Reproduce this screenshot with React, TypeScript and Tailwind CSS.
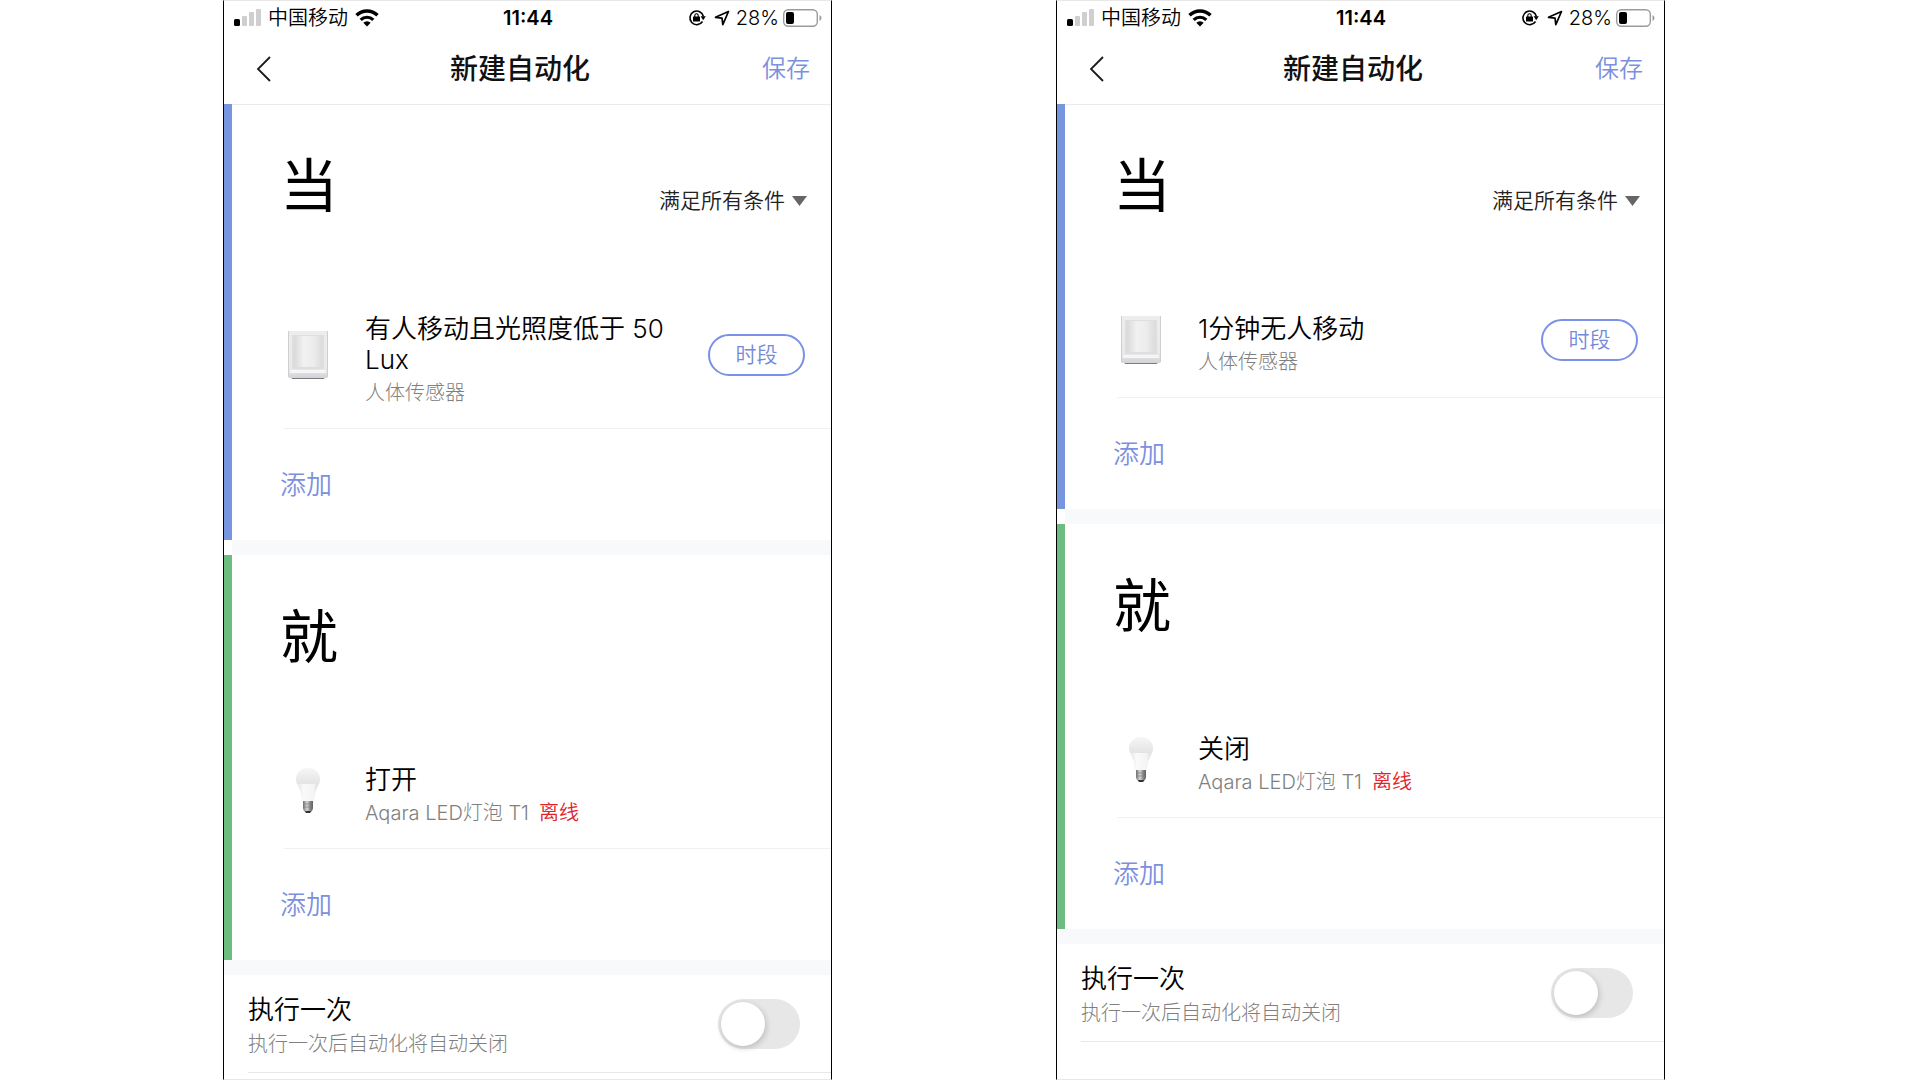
import React, { useId } from "react";

type Device = {
  kind: "sensor" | "bulb";
  title: string;
  name: string;
  offline?: boolean;
  period?: boolean;
};

type Automation = {
  when: Device;
  then: Device;
};

const automations: Automation[] = [
  {
    when: { kind: "sensor", title: "有人移动且光照度低于 50 Lux", name: "人体传感器", period: true },
    then: { kind: "bulb", title: "打开", name: "Aqara LED灯泡 T1", offline: true },
  },
  {
    when: { kind: "sensor", title: "1分钟无人移动", name: "人体传感器", period: true },
    then: { kind: "bulb", title: "关闭", name: "Aqara LED灯泡 T1", offline: true },
  },
];

function SensorIcon() {
  const id = useId();
  return (
    <svg viewBox="0 0 48 56" className="h-14 w-12 shrink-0" aria-hidden="true">
      <defs>
        <linearGradient id={`${id}f`} x1="0" x2="0" y1="0" y2="1">
          <stop offset="0" stopColor="#ededed" />
          <stop offset="0.8" stopColor="#e9e9eb" />
          <stop offset="1" stopColor="#d2d3d6" />
        </linearGradient>
        <linearGradient id={`${id}l`} x1="0" x2="1" y1="0" y2="0">
          <stop offset="0" stopColor="#d9d9d9" />
          <stop offset="0.35" stopColor="#f1f1f1" />
          <stop offset="0.7" stopColor="#ececec" />
          <stop offset="1" stopColor="#dcdcdc" />
        </linearGradient>
      </defs>
      <path d="M7 50h34l-1 2H8z" fill="#7c7c7e" />
      <path d="M4 4h40v45q0 2-2 2H6q-2 0-2-2z" fill={`url(#${id}f)`} />
      <path d="M4.5 4v46M43.5 4v46" stroke="#cfcfcf" fill="none" />
      <rect x="8" y="8" width="32" height="34" fill="#dedede" />
      <rect x="10" y="9" width="28" height="31" fill={`url(#${id}l)`} />
      <path d="M6 43h36v3H6z" fill="#f5f5f6" />
    </svg>
  );
}

function BulbIcon() {
  const id = useId();
  return (
    <svg viewBox="0 0 48 56" className="h-14 w-12 shrink-0" aria-hidden="true">
      <defs>
        <linearGradient id={`${id}g`} x1="0" x2="0" y1="0" y2="1">
          <stop offset="0" stopColor="#f6f6f6" />
          <stop offset="1" stopColor="#e3e3e3" />
        </linearGradient>
        <linearGradient id={`${id}b`} x1="0" x2="1" y1="0" y2="0">
          <stop offset="0" stopColor="#e4e4e4" />
          <stop offset="0.3" stopColor="#fafafa" />
          <stop offset="0.75" stopColor="#f4f4f4" />
          <stop offset="1" stopColor="#d8d8d8" />
        </linearGradient>
        <linearGradient id={`${id}s`} x1="0" x2="1" y1="0" y2="0">
          <stop offset="0" stopColor="#6f6f6f" />
          <stop offset="0.4" stopColor="#d8d8d8" />
          <stop offset="0.7" stopColor="#8a8a8a" />
          <stop offset="1" stopColor="#5c5c5c" />
        </linearGradient>
      </defs>
      <path d="M13 20q2 5 4 10l1 8h12l1-8q2-5 4-10z" fill={`url(#${id}b)`} />
      <path d="M12 16a12 11 0 0 1 24 0q0 3-1 5H13q-1-2-1-5z" fill={`url(#${id}g)`} />
      <path d="M19 38h10v7q0 2-2 4l-1 1h-4l-1-1q-2-2-2-4z" fill={`url(#${id}s)`} />
      <path d="M19 41h10M19 44h10" stroke="#777" strokeWidth="0.6" />
      <path d="M21 48h6l-1 2h-4z" fill="#333" />
    </svg>
  );
}

function StatusBar() {
  return (
    <div className="flex h-[33px] items-center pl-[10px] pr-[9px] text-[20px] leading-6 text-black">
      <div className="flex flex-1 items-center">
        <svg viewBox="0 0 28 17" className="h-[17px] w-7" aria-label="信号">
          <rect x="0" y="10" width="6" height="7" rx="1.5" fill="#000" />
          <rect x="8" y="7" width="5" height="10" rx="1" fill="#cfcfcf" />
          <rect x="15" y="3" width="5" height="14" rx="1" fill="#cfcfcf" />
          <rect x="22" y="0" width="5" height="17" rx="1" fill="#cfcfcf" />
        </svg>
        <span className="ml-[6px] font-[350]">中国移动</span>
        <svg viewBox="0 0 24 18" className="ml-[7px] h-[18px] w-6" aria-label="Wi-Fi">
          <path d="M1.5 6.3a15 15 0 0 1 21 0" fill="none" stroke="#000" strokeWidth="3.4" />
          <path d="M5.7 10.8a9 9 0 0 1 12.600 0" fill="none" stroke="#000" strokeWidth="3.2" />
          <path d="M12 17.5 8.3 13.8a5.300 5.300 0 0 1 7.400 0z" fill="#000" />
        </svg>
      </div>
      <span className="font-semibold">11:44</span>
      <div className="flex flex-1 items-center justify-end">
        <svg viewBox="0 0 18 18" className="h-[18px] w-[18px]" aria-hidden="true">
          <path d="M14.500 12.500a6.800 6.800 0 1 1 .9-5" fill="none" stroke="#000" strokeWidth="1.6" />
          <path d="M12.600 7.300h5.200l-2.600 4z" fill="#000" />
          <rect x="5" y="7.5" width="7" height="5" rx="0.6" fill="#000" />
          <path d="M6.800 8V6.500a1.700 1.700 0 0 1 3.400 0V8" fill="none" stroke="#000" strokeWidth="1.1" />
        </svg>
        <svg viewBox="0 0 16 16" className="ml-2 h-4 w-4" aria-hidden="true">
          <path
            d="M14.500 1.500 1.500 7.300l6.500.8.800 6.500z"
            fill="none"
            stroke="#000"
            strokeWidth="1.7"
            strokeLinejoin="round"
          />
        </svg>
        <span className="ml-[6px] font-light">28%</span>
        <svg viewBox="0 0 39 18" className="ml-1 h-[18px] w-[39px]" aria-label="电量">
          <rect x="0.7" y="0.7" width="33.6" height="16.6" rx="4.5" fill="none" stroke="#9b9b9b" strokeWidth="1.4" />
          <rect x="3" y="3" width="8" height="12" rx="2" fill="#000" />
          <path d="M36.500 6v6q2-1 2-3t-2-3z" fill="#9b9b9b" />
        </svg>
      </div>
    </div>
  );
}

function NavBar() {
  return (
    <header className="flex h-[70px] items-center justify-between pl-8 pr-[21px]">
      <button type="button" aria-label="返回" className="h-8 w-[22px]">
        <svg viewBox="0 0 22 32" className="h-8 w-[22px]" aria-hidden="true">
          <path d="M14 4 2 16l12 12" fill="none" stroke="#1a1a1a" strokeWidth="1.8" />
        </svg>
      </button>
      <h1 className="text-[28px] font-medium leading-9 text-[#111]">新建自动化</h1>
      <button type="button" className="text-[24px] font-[350] leading-8 text-[#7b90de]">
        保存
      </button>
    </header>
  );
}

function ConditionSelect() {
  return (
    <div className="relative mt-[35px]">
      <select
        aria-label="条件"
        className="appearance-none bg-transparent pr-[22px] text-[21px] font-[350] leading-7 text-[#222]"
      >
        <option>满足所有条件</option>
      </select>
      <svg
        viewBox="0 0 15 10"
        className="pointer-events-none absolute right-0 top-[9px] h-[10px] w-[15px]"
        aria-hidden="true"
      >
        <path d="M0 0h15L7.500 10z" fill="#666" />
      </svg>
    </div>
  );
}

function DeviceRow({ kind, title, name, offline, period }: Device) {
  return (
    <div className="ml-1 flex items-center border-b border-[#f1f1f2] py-[21px] pr-[26px]">
      {kind === "sensor" ? <SensorIcon /> : <BulbIcon />}
      <div className="ml-[33px] flex-1 pt-[10px]">
        <p className="text-[26px] font-[350] leading-[31px] text-black">{title}</p>
        <p className="mt-1 text-[20px] font-light leading-7 text-[#808080]">
          {name}
          {offline && <span className="ml-[10px] font-[350] text-[#e0222a]">离线</span>}
        </p>
      </div>
      {period && (
        <button
          type="button"
          className="ml-6 h-[42px] w-[97px] rounded-full border-2 border-[#7b91e6] text-[21px] font-[350] leading-7 text-[#7489d8]"
        >
          时段
        </button>
      )}
    </div>
  );
}

type SectionProps = {
  label: string;
  bar: string;
  line: string;
  device: Device;
  children?: React.ReactNode;
};

function Section({ label, bar, line, device, children }: SectionProps) {
  return (
    <section className="flex">
      <div className={`w-2 shrink-0 ${bar}`} />
      <div className={`flex-1 border-t pl-12 ${line}`}>
        <div className="flex items-start justify-between pb-[62px] pr-6 pt-[47px]">
          <h2 className="text-[58px] leading-[68px] text-black">{label}</h2>
          {children}
        </div>
        <DeviceRow {...device} />
        <div className="flex h-[111px] items-center">
          <button type="button" className="text-[26px] font-[350] leading-8 text-[#7b90de]">
            添加
          </button>
        </div>
      </div>
    </section>
  );
}

function RunOnce() {
  const id = useId();
  return (
    <div className="pl-6">
      <div className="flex h-[98px] items-center justify-between border-b border-[#e8e8e8] pr-[31px]">
        <label htmlFor={id} className="pt-1">
          <span className="block text-[26px] font-[350] leading-8 text-black">执行一次</span>
          <span className="mt-1 block text-[20px] font-light leading-7 text-[#808080]">
            执行一次后自动化将自动关闭
          </span>
        </label>
        <input
          id={id}
          type="checkbox"
          role="switch"
          className="flex h-[50px] w-[82px] appearance-none items-center rounded-full bg-[#e7e7e7] pl-[3px] before:h-11 before:w-11 before:rounded-full before:bg-white before:shadow-[1px_2px_6px_rgba(0,0,0,0.2)] checked:justify-end checked:bg-[#7b91e6] checked:pr-[3px]"
        />
      </div>
    </div>
  );
}

function Phone({ automation }: { automation: Automation }) {
  return (
    <article className="min-h-screen flex-1 border-x border-y border-x-black border-y-[#e8e8e8] bg-white">
      <StatusBar />
      <NavBar />
      <Section label="当" bar="bg-[#7895e0]" line="border-[#ebebeb]" device={automation.when}>
        <ConditionSelect />
      </Section>
      <div className="ml-2 h-[15px] bg-[#f8f9fb]" />
      <Section label="就" bar="bg-[#6dbd81]" line="border-transparent" device={automation.then} />
      <div className="h-[15px] bg-[#f8f9fb]" />
      <RunOnce />
    </article>
  );
}

export default function App() {
  return (
    <main className="flex min-h-screen gap-56 bg-white pl-[223px] pr-[255px] font-['Inter','Noto_Sans_CJK_SC',sans-serif]">
      {automations.map((automation) => (
        <Phone key={automation.when.title} automation={automation} />
      ))}
    </main>
  );
}
